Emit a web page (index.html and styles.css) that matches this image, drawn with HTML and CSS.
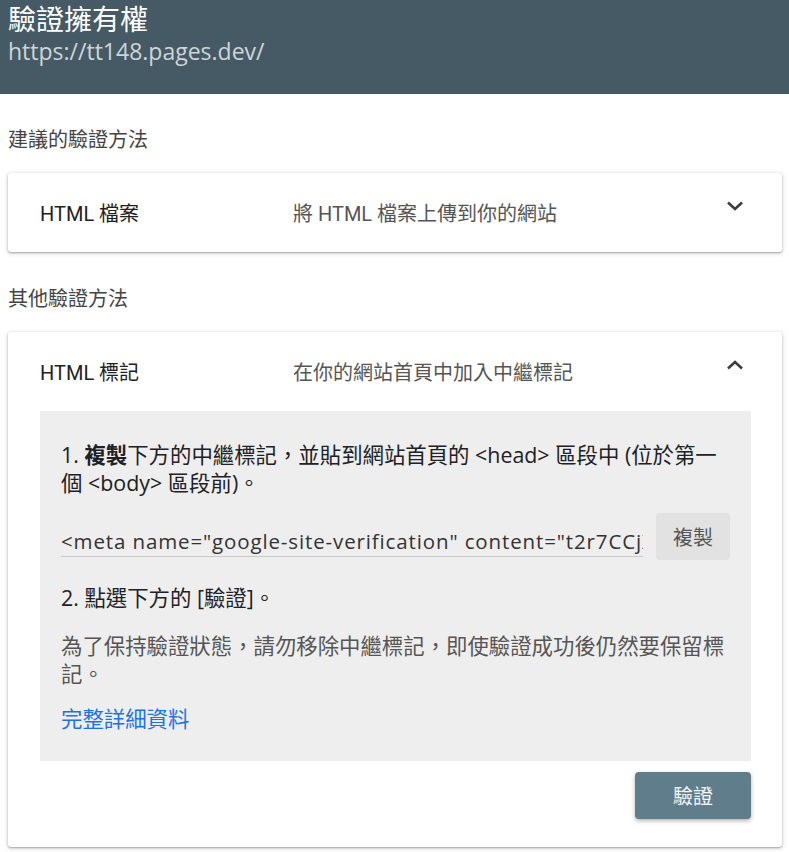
FILE: index.html
```html
<!DOCTYPE html>
<html lang="zh-Hant">
<head>
<meta charset="utf-8">
<title>驗證擁有權</title>
<link rel="stylesheet" href="styles.css">
</head>
<body>
<header class="top">
  <div class="top-title">驗證擁有權</div>
  <div class="top-url">https://tt148.pages.dev/</div>
</header>
<main class="main">
  <div class="section-label">建議的驗證方法</div>
  <section class="card">
    <div class="card-row">
      <div class="card-title">HTML 檔案</div>
      <div class="card-desc">將 HTML 檔案上傳到你的網站</div>
      <svg class="chev" width="18" height="10" viewBox="0 0 18 10"><polyline points="2,1.5 9,8 16,1.5" fill="none" stroke="#3c3c3c" stroke-width="2.6"/></svg>
    </div>
  </section>

  <div class="section-label section-label-2">其他驗證方法</div>
  <section class="card">
    <div class="card-row">
      <div class="card-title">HTML 標記</div>
      <div class="card-desc">在你的網站首頁中加入中繼標記</div>
      <svg class="chev" width="18" height="10" viewBox="0 0 18 10"><polyline points="2,8.5 9,2 16,8.5" fill="none" stroke="#3c3c3c" stroke-width="2.6"/></svg>
    </div>
    <div class="panel">
      <p class="step">1. <b>複製</b>下方的中繼標記，並貼到網站首頁的 &lt;head&gt; 區段中 (位於第一個 &lt;body&gt; 區段前)。</p>
      <div class="meta-row">
        <input class="meta-input" type="text" readonly value='&lt;meta name="google-site-verification" content="t2r7CCjXq0yL2Vf3" /&gt;'>
        <button class="copy-btn" type="button">複製</button>
      </div>
      <p class="step step-2">2. 點選下方的 [驗證]。</p>
      <p class="note">為了保持驗證狀態，請勿移除中繼標記，即使驗證成功後仍然要保留標記。</p>
      <a class="more" href="#">完整詳細資料</a>
    </div>
    <div class="card-foot">
      <button class="verify-btn" type="button">驗證</button>
    </div>
  </section>
</main>
</body>
</html>
```

FILE: styles.css
```css
html, body {
  margin: 0;
  padding: 0;
  background: #ffffff;
}
body {
  font-family: "Open Sans", "Noto Sans CJK TC", sans-serif;
  color: #202124;
}
.top {
  background: #455a64;
  height: 94px;
  padding: 2px 8px 0;
  box-sizing: border-box;
}
.top-title {
  font-family: "Noto Sans CJK TC", sans-serif;
  font-size: 28px;
  line-height: 32px;
  color: #ffffff;
}
.top-url {
  font-family: "Open Sans", sans-serif;
  font-size: 23px;
  line-height: 34px;
  color: #cdd5d9;
}
.main {
  padding: 0 7px 8px 8px;
}
.section-label {
  margin-top: 33px;
  font-family: "Noto Sans CJK TC", sans-serif;
  font-size: 20px;
  line-height: 24px;
  color: #444444;
}
.section-label-2 {
  margin-top: 34px;
}
.card {
  margin-top: 22px;
  background: #ffffff;
  border-radius: 3px;
  box-shadow: 0 1px 2px rgba(0, 0, 0, 0.28), 0 1px 4px 1px rgba(0, 0, 0, 0.12);
}
.card-row {
  height: 79px;
  display: flex;
  align-items: center;
  padding: 0 38px 0 32px;
}
.card-title {
  flex: 0 0 253px;
  font-family: Roboto, "Noto Sans CJK TC", sans-serif;
  font-size: 20px;
  color: #212121;
}
.card-desc {
  flex: 1;
  font-family: Roboto, "Noto Sans CJK TC", sans-serif;
  font-size: 20px;
  color: #555555;
}
.chev {
  display: block;
  margin-bottom: 14px;
}
.panel {
  margin: 0 31px 0 32px;
  background: #eeeeee;
  padding: 30px 21px 28px;
  font-size: 21.4px;
  line-height: 28px;
}
.step {
  margin: 0;
  color: #202124;
}
.step b {
  font-weight: 700;
}
.meta-row {
  margin-top: 16px;
  display: flex;
  align-items: flex-end;
  gap: 13px;
}
.meta-input {
  flex: 1;
  min-width: 0;
  height: 32px;
  box-sizing: border-box;
  margin: 0 0 3px 0;
  padding: 0;
  border: none;
  border-bottom: 1px solid #c9c9c9;
  background: transparent;
  font-family: "Open Sans", sans-serif;
  font-size: 20.5px;
  letter-spacing: 0.87px;
  color: #333333;
  outline: none;
}
.copy-btn {
  flex: 0 0 74px;
  height: 47px;
  border: none;
  border-radius: 4px;
  background: #e2e2e2;
  font-family: "Noto Sans CJK TC", sans-serif;
  font-size: 20px;
  color: #555555;
  padding: 0;
}
.step-2 {
  margin-top: 24px;
}
.note {
  margin: 20px 0 0;
  color: #555555;
}
.more {
  display: block;
  margin-top: 17px;
  color: #1a73e8;
  text-decoration: none;
}
.card-foot {
  display: flex;
  justify-content: flex-end;
  padding: 11px 31px 28px;
}
.verify-btn {
  width: 116px;
  height: 47px;
  border: none;
  border-radius: 4px;
  background: #607d8b;
  color: #f4f7f8;
  font-family: "Noto Sans CJK TC", sans-serif;
  font-size: 20px;
  box-shadow: 0 2px 4px rgba(0, 0, 0, 0.3);
  padding: 0;
}
```
